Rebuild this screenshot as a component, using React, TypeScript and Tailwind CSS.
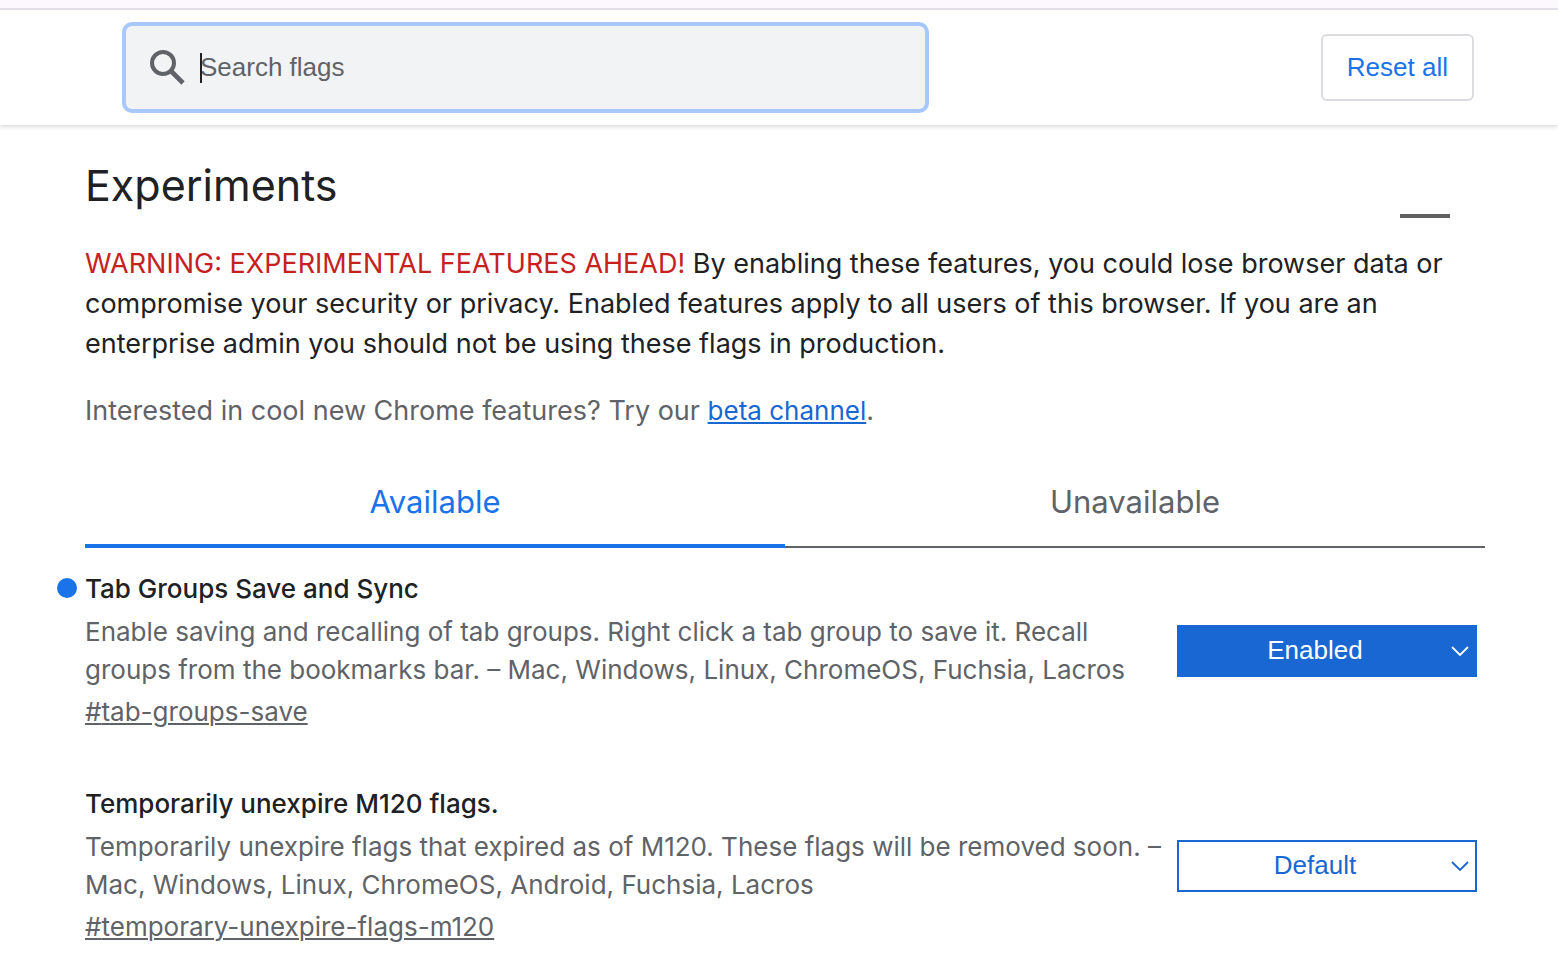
import { useState } from "react";

type Flag = {
  id: string;
  title: string;
  description: string;
  value: string;
  modified: boolean;
};

const flags: Flag[] = [
  {
    id: "tab-groups-save",
    title: "Tab Groups Save and Sync",
    description:
      "Enable saving and recalling of tab groups. Right click a tab group to save it. Recall groups from the bookmarks bar. – Mac, Windows, Linux, ChromeOS, Fuchsia, Lacros",
    value: "Enabled",
    modified: true,
  },
  {
    id: "temporary-unexpire-flags-m120",
    title: "Temporarily unexpire M120 flags.",
    description:
      "Temporarily unexpire flags that expired as of M120. These flags will be removed soon. – Mac, Windows, Linux, ChromeOS, Android, Fuchsia, Lacros",
    value: "Default",
    modified: false,
  },
];

function FlagRow({ flag }: { flag: Flag }) {
  const [value, setValue] = useState(flag.value);
  const isDefault = value === "Default";
  return (
    <section className="flex items-center">
      <div className="min-w-0 flex-1">
        <h2 className="relative text-[26px] leading-[38px] font-medium text-[#202124]">
          {flag.modified && (
            <span className="absolute top-2 -left-7 size-5 rounded-full bg-[#1a73e8]" />
          )}
          <label htmlFor={flag.id}>{flag.title}</label>
        </h2>
        <p className="mt-[5px] text-[26px] leading-[38px] text-[#5f6368]">{flag.description}</p>
        <a
          href={`#${flag.id}`}
          className="mt-1 inline-block text-[26px] leading-[38px] text-[#5f6368] underline decoration-2 underline-offset-2"
        >
          #{flag.id}
        </a>
      </div>
      <div className="relative mr-2 ml-3 w-[300px] shrink-0">
        <select
          id={flag.id}
          value={value}
          onChange={(e) => setValue(e.target.value)}
          className={
            "block h-[52px] w-full appearance-none border-2 border-[#1967d2] pr-6 text-center font-['Liberation_Sans',Arial,sans-serif] text-[26px] [text-align-last:center] " +
            (isDefault ? "bg-white text-[#1967d2]" : "bg-[#1967d2] text-white")
          }
        >
          <option>Default</option>
          <option>Enabled</option>
          <option>Disabled</option>
        </select>
        <svg
          viewBox="0 0 18 12"
          className={
            "pointer-events-none absolute top-5 right-2 h-3 w-[18px] " +
            (isDefault ? "text-[#1967d2]" : "text-white")
          }
          fill="none"
          stroke="currentColor"
          strokeWidth="1.8"
        >
          <path d="M1 2 L9 10 L17 2" />
        </svg>
      </div>
    </section>
  );
}

export default function App() {
  const [query, setQuery] = useState("");
  return (
    <div className="min-h-screen bg-white font-[Inter,sans-serif]">
      <div className="h-[10px] border-b-2 border-[#e6e0e9] bg-[#fdf7fe]" />
      <header className="flex items-center justify-between py-4 pr-[84px] pl-[126px] shadow-[0_2px_4px_rgba(0,0,0,0.14)]">
        <label className="relative flex h-[83px] w-[799px] items-center rounded-md bg-[#f1f3f4] ring-4 ring-[#a8c7fa]">
          <svg viewBox="0 0 35 35" className="ml-6 size-[35px] shrink-0" fill="none" stroke="#5f6368">
            <circle cx="13" cy="13" r="11" strokeWidth="4" />
            <path d="M21.5 21.5 L33 33" strokeWidth="4.6" />
          </svg>
          <span className="relative ml-[15px] flex flex-1">
            <input
              type="text"
              aria-label="Search flags"
              placeholder="Search flags"
              value={query}
              onChange={(e) => setQuery(e.target.value)}
              className="h-[30px] w-full bg-transparent font-['Liberation_Sans',Arial,sans-serif] text-[26px] text-[#202124] caret-transparent outline-none placeholder:text-[#5f6368]"
            />
            <span className="absolute inset-y-0 left-0 w-[2px] bg-[#202124]" />
          </span>
        </label>
        <button
          type="button"
          className="h-[67px] rounded-md border-2 border-[#dadce0] bg-white px-6 font-['Liberation_Sans',Arial,sans-serif] text-[26px] text-[#1a73e8]"
        >
          Reset all
        </button>
      </header>

      <main className="pr-[73px] pl-[85px]">
        <div className="flex items-end justify-between pt-8">
          <h1 className="pb-1 text-[43px] leading-[57px] text-[#202124]">Experiments</h1>
          <span className="mr-[35px] h-1 w-[50px] bg-[#5f5f61]" />
        </div>
        <p className="mt-[26px] text-[27px] leading-[40px] text-[#202124]">
          <span className="text-[#c5221f]">WARNING: EXPERIMENTAL FEATURES AHEAD!</span> By enabling
          these features, you could lose browser data or compromise your security or privacy.
          Enabled features apply to all users of this browser. If you are an enterprise admin you
          should not be using these flags in production.
        </p>
        <p className="mt-[27px] text-[27px] leading-[40px] text-[#5f6368]">
          Interested in cool new Chrome features? Try our{" "}
          <a
            href="#beta"
            className="text-[26px] text-[#1967d2] underline decoration-2 underline-offset-2"
          >
            beta channel
          </a>
          .
        </p>

        <div role="tablist" className="mt-[30px] flex text-[31px]">
          <button
            type="button"
            role="tab"
            aria-selected="true"
            className="h-[87px] flex-1 border-b-4 border-[#1a73e8] text-[#1a73e8]"
          >
            Available
          </button>
          <button
            type="button"
            role="tab"
            aria-selected="false"
            className="h-[87px] flex-1 border-b-2 border-[#5f6368] pb-0.5 text-[#5f6368]"
          >
            Unavailable
          </button>
        </div>

        <div className="flex flex-col gap-[54px] pt-[22px]">
          {flags.map((flag) => (
            <FlagRow key={flag.id} flag={flag} />
          ))}
        </div>
      </main>
    </div>
  );
}
